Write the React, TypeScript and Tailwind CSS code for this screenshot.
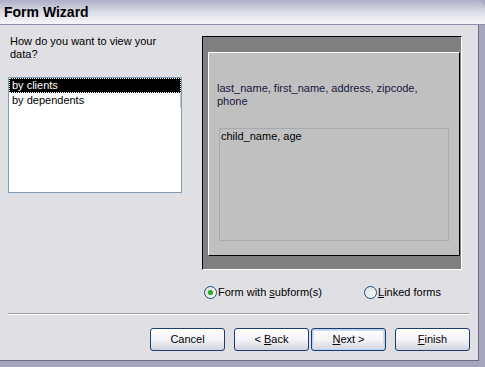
import React from "react";

const font = { fontFamily: '"Liberation Sans", Arial, sans-serif' };

function Radio({ checked }: { checked?: boolean }) {
  return (
    <span className="flex h-[13px] w-[13px] shrink-0 items-center justify-center rounded-full border border-[#1c5180] bg-gradient-to-br from-[#dcdcd7] to-white">
      {checked && <span className="h-[5px] w-[5px] rounded-full bg-[#2fa82f] shadow-[0_0_1px_#5fd35f]" />}
    </span>
  );
}

function WizButton({ children, primary }: { children: React.ReactNode; primary?: boolean }) {
  return (
    <button
      className={
        "flex h-[23px] w-[75px] shrink-0 items-center justify-center rounded-[3px] border border-[#1b3e6e] bg-gradient-to-b from-white via-[#f4f4f8] to-[#d3d3de] text-[11px] leading-[13px] text-black " +
        (primary ? "shadow-[inset_0_0_0_1px_#b9d1ee,inset_0_0_0_2px_#cfdff4]" : "")
      }
    >
      <span className="whitespace-pre">{children}</span>
    </button>
  );
}

export default function App() {
  return (
    <div className="flex h-[367px] w-[485px] flex-col overflow-hidden bg-[#a7a6be]" style={font}>
      {/* Title bar */}
      <div className="flex h-[25px] shrink-0 items-center rounded-tr-[7px] border-b border-[#8e8ea8] bg-gradient-to-b from-[#aeaec6] via-[#dcdce6] to-[#f6f6f9] pl-[4px]">
        <span className="text-[14px] font-bold leading-[16px] text-black">Form Wizard</span>
      </div>

      <div className="flex min-h-0 flex-1">
        <div className="flex w-[478px] shrink-0 flex-col border-b border-[#6d6d7d] bg-[#e0dfe3] text-[11px] leading-[13px] text-black">
          {/* Top section */}
          <div className="flex pt-[11px]">
            <div className="w-[202px] shrink-0 pl-[8px]">
              <p className="-mt-px w-[160px] pl-[2px]">How do you want to view your data?</p>
              <div className="mt-[16px] h-[116px] w-[174px] border border-[#7f9db9] bg-white">
                <div className="h-[15px] border border-dotted border-white bg-black pl-[2px] leading-[13px] text-white">
                  by clients
                </div>
                <div className="h-[15px] border-r border-[#c4c4c4] pl-[3px] pt-px leading-[13px]">by dependents</div>
              </div>
            </div>

            {/* Preview */}
            <div className="flex h-[234px] w-[260px] shrink-0 flex-col border-l border-t border-b border-r border-l-black border-t-black border-b-white border-r-white bg-[#808080] pl-[5px] pr-px pt-[15px]">
              <div className="h-[204px] border border-l-white border-t-white border-r-black border-b-black bg-[#c0c0c0] pl-[8px] pt-[29px]">
                <p className="w-[220px] text-[#161640]">last_name, first_name, address, zipcode, phone</p>
                <div className="ml-[2px] mt-[20px] h-[113px] w-[230px] border border-[#a2aab3] pl-px pt-px">child_name, age</div>
              </div>
            </div>
          </div>

          {/* Radios */}
          <div className="mt-[15px] flex h-[14px] items-center pl-[204px]">
            <div className="flex w-[160px] items-center gap-px">
              <Radio checked />
              <span>
                Form with <span className="underline underline-offset-1">s</span>ubform(s)
              </span>
            </div>
            <div className="flex items-center gap-px">
              <Radio />
              <span>
                <span className="underline underline-offset-1">L</span>inked forms
              </span>
            </div>
          </div>

          {/* Separator */}
          <div className="ml-[8px] mt-[14px] h-[2px] w-[461px] border-t border-b border-t-[#9d9da1] border-b-white" />

          {/* Buttons */}
          <div className="mt-[13px] flex pl-[150px]">
            <WizButton>Cancel</WizButton>
            <div className="ml-[9px]">
              <WizButton>
                {"< "}
                <span className="underline underline-offset-1">B</span>ack
              </WizButton>
            </div>
            <div className="ml-[2px]">
              <WizButton primary>
                <span className="underline underline-offset-1">N</span>
                {"ext >"}
              </WizButton>
            </div>
            <div className="ml-[9px]">
              <WizButton>
                <span className="underline underline-offset-1">F</span>inish
              </WizButton>
            </div>
          </div>
        </div>
        <div className="w-px shrink-0 bg-[#6d6d7d]" />
      </div>
      <div className="h-[6px] shrink-0" />
    </div>
  );
}
